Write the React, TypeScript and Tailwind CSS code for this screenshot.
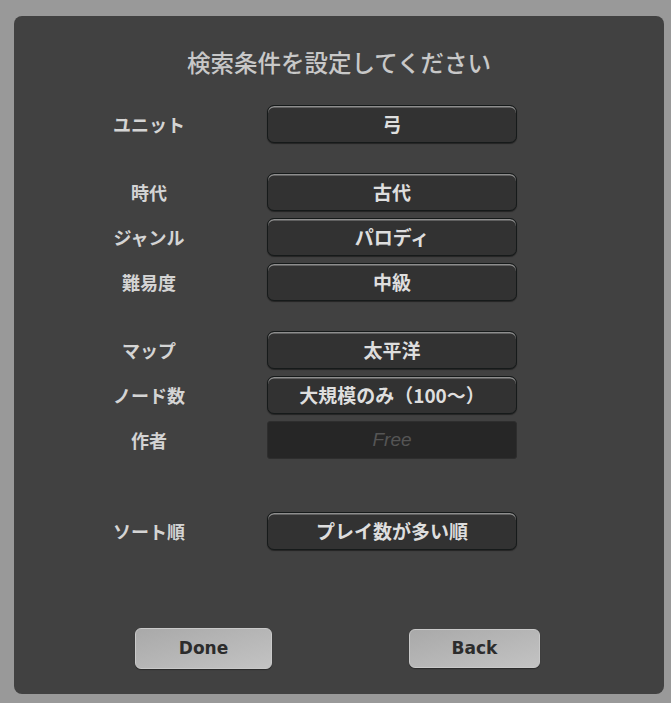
import React from "react";

function SelectBtn({ value }: { value: string }) {
  return (
    <div className="ml-[43px] w-[250px] h-[38px] rounded-[7px] bg-[#323232] border border-[#161a1a] shadow-[inset_0_1.5px_0_#8e8e8e,0_1px_1px_rgba(0,0,0,0.45)] flex items-center justify-center text-[19px] font-bold text-[#dedede]">
      {value}
    </div>
  );
}

function Row({ label, value, mt }: { label: string; value?: string; mt: string }) {
  return (
    <div className={`flex items-center ${mt}`}>
      <div className="w-[150px] ml-[60px] text-center text-[18px] font-bold text-[#d4d4d4]">{label}</div>
      {value !== undefined ? (
        <SelectBtn value={value} />
      ) : (
        <div className="ml-[43px] w-[250px] h-[38px] rounded-[3px] bg-[#262626] border border-[#2e2e2e] flex items-center justify-center">
          <span className="italic text-[19px] text-[#555555] font-['Liberation_Sans',sans-serif]">Free</span>
        </div>
      )}
    </div>
  );
}

export default function App() {
  return (
    <div className="w-[671px] h-[703px] bg-[#999999] pt-[16px] pl-[14px] overflow-hidden font-['Noto_Sans_CJK_JP','Noto_Sans',sans-serif]">
      <div className="w-[650px] h-[678px] rounded-[8px] bg-[#414141] flex flex-col pt-[30px]">
        <div className="h-[32px] leading-[32px] text-center text-[23.5px] font-medium text-[#c8c8c8]">
          検索条件を設定してください
        </div>
        <Row label="ユニット" value="弓" mt="mt-[27px]" />
        <Row label="時代" value="古代" mt="mt-[30px]" />
        <Row label="ジャンル" value="パロディ" mt="mt-[7px]" />
        <Row label="難易度" value="中級" mt="mt-[7px]" />
        <Row label="マップ" value="太平洋" mt="mt-[30px]" />
        <Row label="ノード数" value="大規模のみ（100～）" mt="mt-[7px]" />
        <Row label="作者" mt="mt-[7px]" />
        <Row label="ソート順" value="プレイ数が多い順" mt="mt-[53px]" />
        <div className="flex items-start mt-[78px] font-['DejaVu_Sans',sans-serif]">
          <div className="ml-[121px] w-[137px] h-[41px] rounded-[6px] border border-[#c9c9c9] bg-gradient-to-br from-[#a9a9a9] to-[#c3c3c3] shadow-[0_1px_1px_rgba(0,0,0,0.35)] flex items-center justify-center text-[17px] font-bold text-[#2c2c2c]">
            Done
          </div>
          <div className="ml-[137px] mt-[1px] w-[131px] h-[39px] rounded-[6px] border border-[#c9c9c9] bg-gradient-to-br from-[#a9a9a9] to-[#c3c3c3] shadow-[0_1px_1px_rgba(0,0,0,0.35)] flex items-center justify-center text-[17px] font-bold text-[#2c2c2c]">
            Back
          </div>
        </div>
      </div>
    </div>
  );
}
